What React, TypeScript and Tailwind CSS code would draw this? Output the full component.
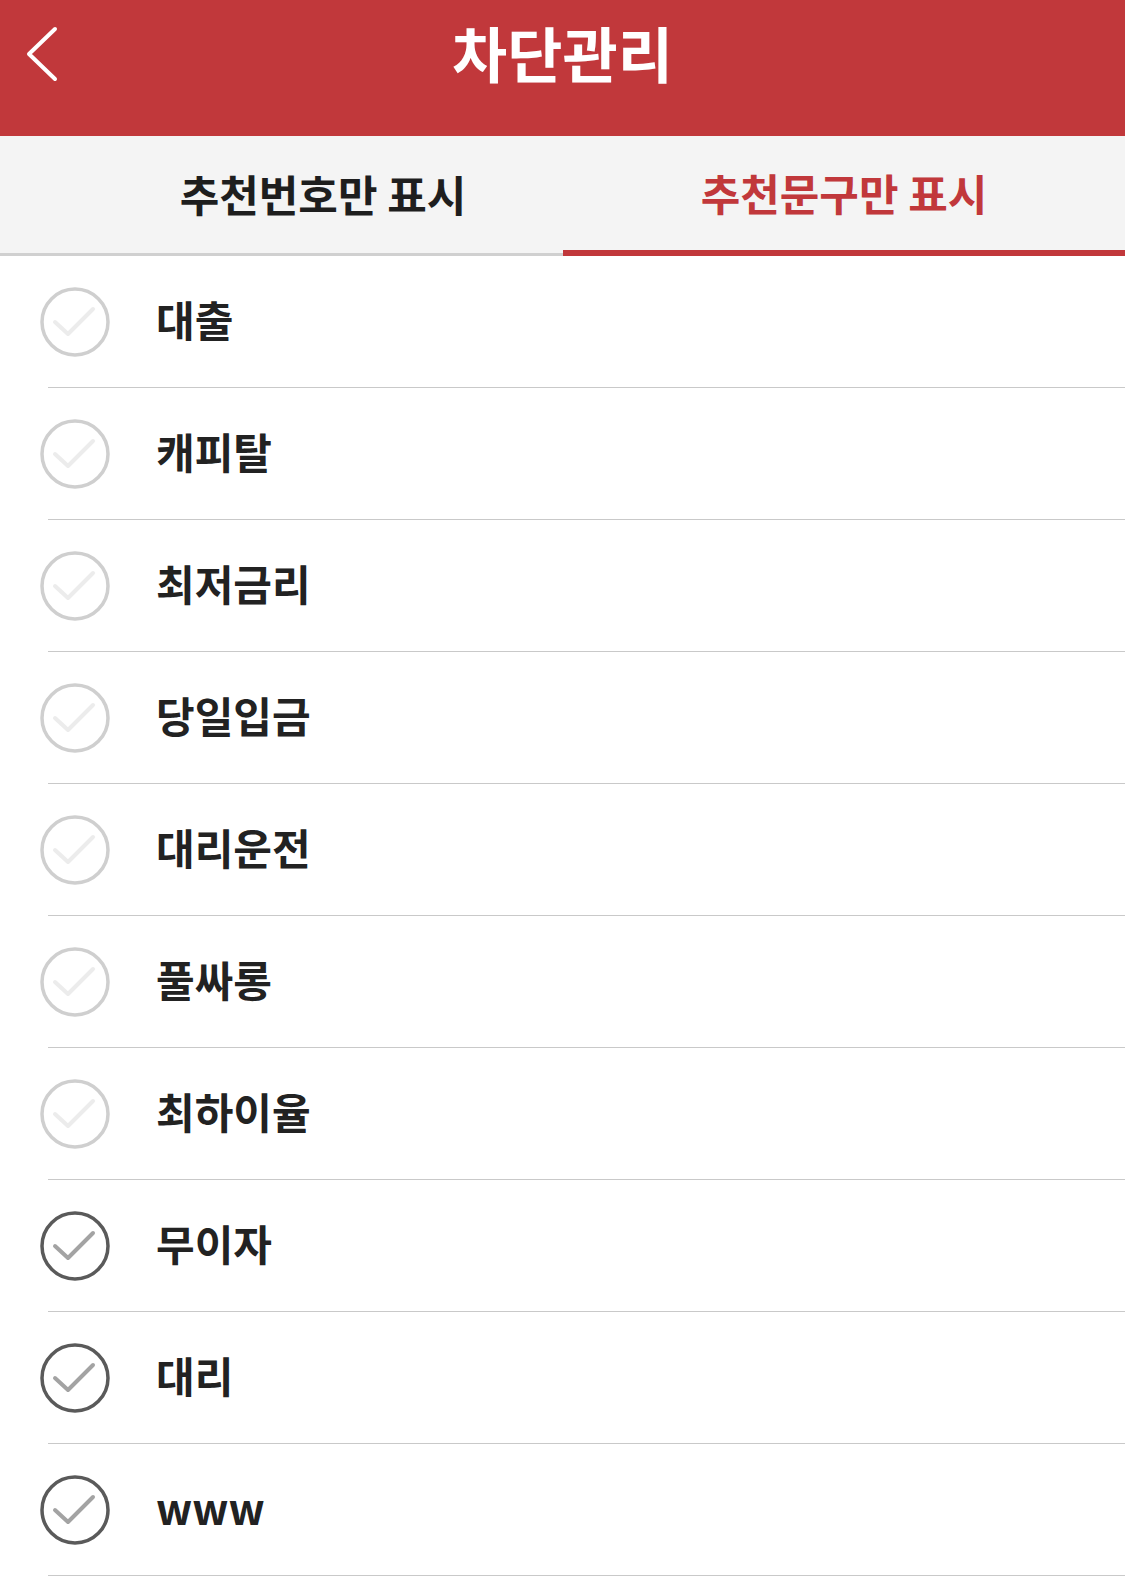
import React from 'react';

const items = [
  { label: '대출', checked: false },
  { label: '캐피탈', checked: false },
  { label: '최저금리', checked: false },
  { label: '당일입금', checked: false },
  { label: '대리운전', checked: false },
  { label: '풀싸롱', checked: false },
  { label: '최하이율', checked: false },
  { label: '무이자', checked: true },
  { label: '대리', checked: true },
  { label: 'www', checked: true },
];

const CheckCircle = ({ checked }: { checked: boolean }) => (
  <svg width="72" height="72" viewBox="0 0 72 72" className="shrink-0">
    <circle cx="36" cy="36" r="33" fill="none" stroke={checked ? '#5a5a5a' : '#cfcfcf'} strokeWidth="3.5" />
    <path
      d="M16 36 L29 48 L54 23"
      fill="none"
      stroke={checked ? '#a3a3a3' : '#ececec'}
      strokeWidth="4"
      strokeLinecap="round"
      strokeLinejoin="round"
    />
  </svg>
);

const App = () => {
  return (
    <div className="w-[1125px] min-h-[1579px] bg-white font-['Noto_Sans_CJK_KR','Noto_Sans',sans-serif]">
      {/* header */}
      <div className="h-[136px] bg-[#c1383b] pb-[28px]">
        <div className="relative h-[108px] flex items-center justify-center">
          <button className="absolute left-[24px] top-[24px] w-[36px] h-[60px] flex items-center justify-center">
            <svg width="36" height="60" viewBox="0 0 36 60">
              <path d="M31 5 L5 30 L31 55" fill="none" stroke="#fff" strokeWidth="4" strokeLinecap="round" strokeLinejoin="round" />
            </svg>
          </button>
          <h1 className="text-white text-[60px] font-bold leading-none mb-[4px]">차단관리</h1>
        </div>
      </div>

      {/* tabs */}
      <div className="flex h-[120px] bg-[#f4f4f4]">
        <div className="w-[563px] flex items-center justify-center pl-[83px] border-b-[3px] border-[#d0d0d0]">
          <span className="text-[43px] font-bold text-[#1e1e1e] leading-none mb-[2px]">추천번호만 표시</span>
        </div>
        <div className="flex-1 flex items-center justify-center border-b-[6px] border-[#c1383b]">
          <span className="text-[43px] font-bold text-[#c1383b] leading-none mb-[2px]">추천문구만 표시</span>
        </div>
      </div>

      {/* list */}
      <ul>
        {items.map((item) => (
          <li key={item.label} className="pl-[39px]">
            <div className="h-[131px] flex items-center">
              <CheckCircle checked={item.checked} />
              <span className="ml-[45px] mb-[6px] text-[42px] font-bold text-[#222] leading-none">{item.label}</span>
            </div>
            <div className="ml-[9px] h-px bg-[#c9c9c9]" />
          </li>
        ))}
      </ul>
    </div>
  );
};

export default App;
